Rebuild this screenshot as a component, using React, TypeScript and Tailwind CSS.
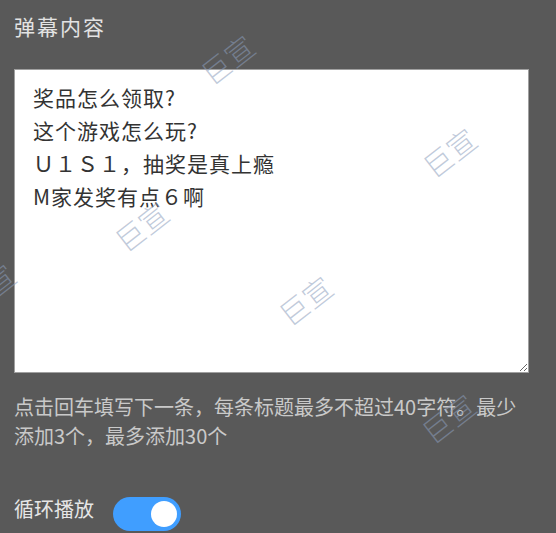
import React from "react";

const marks: { x: number; y: number }[] = [
  { x: 227, y: 59 },
  { x: 449, y: 152 },
  { x: 141, y: 226 },
  { x: 305, y: 300 },
  { x: 448, y: 418 },
  { x: -12, y: 288 },
];

const text = "奖品怎么领取?\n这个游戏怎么玩?\nＵ１Ｓ１，抽奖是真上瘾\nM家发奖有点６啊";

export default function App() {
  return (
    <div
      className="relative w-[556px] h-[533px] overflow-hidden bg-[#595959] px-[14px]"
      style={{ fontFamily: '"Noto Sans CJK SC", "Noto Sans", sans-serif' }}
    >
      <div className="pt-[11px] text-[21px] leading-[30px] tracking-[2px] text-[#e3e3e3]">弹幕内容</div>
      <textarea
        defaultValue={text}
        className="mt-[28px] block w-[515px] h-[304px] resize border border-[#a0a0a0] bg-white px-[18px] py-[11px] text-[21px] leading-[33px] tracking-[1px] text-[#333333] outline-none"
        style={{ fontFamily: '"Noto Sans CJK SC", "Noto Sans", sans-serif' }}
      />
      <div className="mt-[19px] text-[20px] leading-[29px] text-[#c9c9c9]">
        点击回车填写下一条，每条标题最多不超过40字符。最少
        <br />
        添加3个，最多添加30个
      </div>
      <div className="mt-[44px] flex items-start gap-[19px]">
        <span className="text-[20px] leading-[30px] text-[#e6e6e6]">循环播放</span>
        <button
          type="button"
          className="mt-[3px] flex h-[34px] w-[68px] items-center justify-end rounded-full bg-[#409eff] pr-[4px]"
        >
          <span className="block h-[26px] w-[26px] rounded-full bg-white" />
        </button>
      </div>
      <div className="pointer-events-none absolute inset-0">
        {marks.map((m, i) => (
          <div
            key={i}
            className="absolute -translate-x-1/2 -translate-y-1/2 -rotate-[38deg] whitespace-nowrap text-[29px] font-extralight leading-none text-[rgba(140,158,188,0.55)]"
            style={{ left: m.x, top: m.y }}
          >
            巨宣
          </div>
        ))}
      </div>
    </div>
  );
}
